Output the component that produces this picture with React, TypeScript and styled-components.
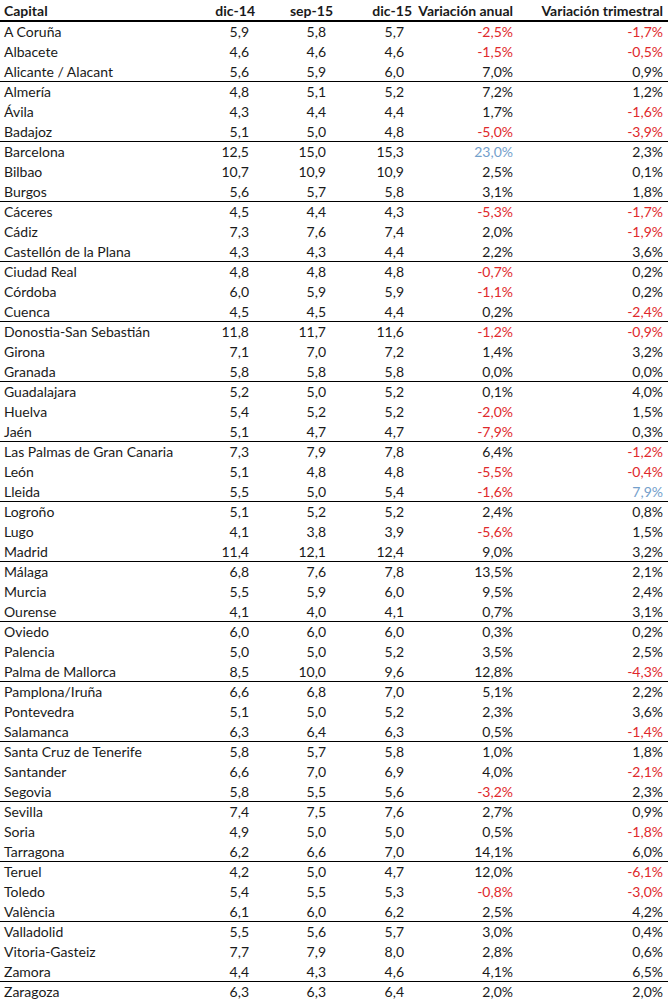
import React from "react";
import styled, { createGlobalStyle } from "styled-components";

const Global = createGlobalStyle`
  html, body { margin: 0; padding: 0; background: #ffffff; }
  body { font-family: Lato, "Open Sans", "Liberation Sans", sans-serif; }
`;

type Tone = "plain" | "neg" | "hi";

type Row = {
  name: string;
  d14: string;
  s15: string;
  d15: string;
  anual: string;
  trim: string;
  hiAnual?: boolean;
  hiTrim?: boolean;
};

const rows: Row[] = [
  { name: "A Coruña", d14: "5,9", s15: "5,8", d15: "5,7", anual: "-2,5%", trim: "-1,7%" },
  { name: "Albacete", d14: "4,6", s15: "4,6", d15: "4,6", anual: "-1,5%", trim: "-0,5%" },
  { name: "Alicante / Alacant", d14: "5,6", s15: "5,9", d15: "6,0", anual: "7,0%", trim: "0,9%" },
  { name: "Almería", d14: "4,8", s15: "5,1", d15: "5,2", anual: "7,2%", trim: "1,2%" },
  { name: "Ávila", d14: "4,3", s15: "4,4", d15: "4,4", anual: "1,7%", trim: "-1,6%" },
  { name: "Badajoz", d14: "5,1", s15: "5,0", d15: "4,8", anual: "-5,0%", trim: "-3,9%" },
  { name: "Barcelona", d14: "12,5", s15: "15,0", d15: "15,3", anual: "23,0%", trim: "2,3%", hiAnual: true },
  { name: "Bilbao", d14: "10,7", s15: "10,9", d15: "10,9", anual: "2,5%", trim: "0,1%" },
  { name: "Burgos", d14: "5,6", s15: "5,7", d15: "5,8", anual: "3,1%", trim: "1,8%" },
  { name: "Cáceres", d14: "4,5", s15: "4,4", d15: "4,3", anual: "-5,3%", trim: "-1,7%" },
  { name: "Cádiz", d14: "7,3", s15: "7,6", d15: "7,4", anual: "2,0%", trim: "-1,9%" },
  { name: "Castellón de la Plana", d14: "4,3", s15: "4,3", d15: "4,4", anual: "2,2%", trim: "3,6%" },
  { name: "Ciudad Real", d14: "4,8", s15: "4,8", d15: "4,8", anual: "-0,7%", trim: "0,2%" },
  { name: "Córdoba", d14: "6,0", s15: "5,9", d15: "5,9", anual: "-1,1%", trim: "0,2%" },
  { name: "Cuenca", d14: "4,5", s15: "4,5", d15: "4,4", anual: "0,2%", trim: "-2,4%" },
  { name: "Donostia-San Sebastián", d14: "11,8", s15: "11,7", d15: "11,6", anual: "-1,2%", trim: "-0,9%" },
  { name: "Girona", d14: "7,1", s15: "7,0", d15: "7,2", anual: "1,4%", trim: "3,2%" },
  { name: "Granada", d14: "5,8", s15: "5,8", d15: "5,8", anual: "0,0%", trim: "0,0%" },
  { name: "Guadalajara", d14: "5,2", s15: "5,0", d15: "5,2", anual: "0,1%", trim: "4,0%" },
  { name: "Huelva", d14: "5,4", s15: "5,2", d15: "5,2", anual: "-2,0%", trim: "1,5%" },
  { name: "Jaén", d14: "5,1", s15: "4,7", d15: "4,7", anual: "-7,9%", trim: "0,3%" },
  { name: "Las Palmas de Gran Canaria", d14: "7,3", s15: "7,9", d15: "7,8", anual: "6,4%", trim: "-1,2%" },
  { name: "León", d14: "5,1", s15: "4,8", d15: "4,8", anual: "-5,5%", trim: "-0,4%" },
  { name: "Lleida", d14: "5,5", s15: "5,0", d15: "5,4", anual: "-1,6%", trim: "7,9%", hiTrim: true },
  { name: "Logroño", d14: "5,1", s15: "5,2", d15: "5,2", anual: "2,4%", trim: "0,8%" },
  { name: "Lugo", d14: "4,1", s15: "3,8", d15: "3,9", anual: "-5,6%", trim: "1,5%" },
  { name: "Madrid", d14: "11,4", s15: "12,1", d15: "12,4", anual: "9,0%", trim: "3,2%" },
  { name: "Málaga", d14: "6,8", s15: "7,6", d15: "7,8", anual: "13,5%", trim: "2,1%" },
  { name: "Murcia", d14: "5,5", s15: "5,9", d15: "6,0", anual: "9,5%", trim: "2,4%" },
  { name: "Ourense", d14: "4,1", s15: "4,0", d15: "4,1", anual: "0,7%", trim: "3,1%" },
  { name: "Oviedo", d14: "6,0", s15: "6,0", d15: "6,0", anual: "0,3%", trim: "0,2%" },
  { name: "Palencia", d14: "5,0", s15: "5,0", d15: "5,2", anual: "3,5%", trim: "2,5%" },
  { name: "Palma de Mallorca", d14: "8,5", s15: "10,0", d15: "9,6", anual: "12,8%", trim: "-4,3%" },
  { name: "Pamplona/Iruña", d14: "6,6", s15: "6,8", d15: "7,0", anual: "5,1%", trim: "2,2%" },
  { name: "Pontevedra", d14: "5,1", s15: "5,0", d15: "5,2", anual: "2,3%", trim: "3,6%" },
  { name: "Salamanca", d14: "6,3", s15: "6,4", d15: "6,3", anual: "0,5%", trim: "-1,4%" },
  { name: "Santa Cruz de Tenerife", d14: "5,8", s15: "5,7", d15: "5,8", anual: "1,0%", trim: "1,8%" },
  { name: "Santander", d14: "6,6", s15: "7,0", d15: "6,9", anual: "4,0%", trim: "-2,1%" },
  { name: "Segovia", d14: "5,8", s15: "5,5", d15: "5,6", anual: "-3,2%", trim: "2,3%" },
  { name: "Sevilla", d14: "7,4", s15: "7,5", d15: "7,6", anual: "2,7%", trim: "0,9%" },
  { name: "Soria", d14: "4,9", s15: "5,0", d15: "5,0", anual: "0,5%", trim: "-1,8%" },
  { name: "Tarragona", d14: "6,2", s15: "6,6", d15: "7,0", anual: "14,1%", trim: "6,0%" },
  { name: "Teruel", d14: "4,2", s15: "5,0", d15: "4,7", anual: "12,0%", trim: "-6,1%" },
  { name: "Toledo", d14: "5,4", s15: "5,5", d15: "5,3", anual: "-0,8%", trim: "-3,0%" },
  { name: "València", d14: "6,1", s15: "6,0", d15: "6,2", anual: "2,5%", trim: "4,2%" },
  { name: "Valladolid", d14: "5,5", s15: "5,6", d15: "5,7", anual: "3,0%", trim: "0,4%" },
  { name: "Vitoria-Gasteiz", d14: "7,7", s15: "7,9", d15: "8,0", anual: "2,8%", trim: "0,6%" },
  { name: "Zamora", d14: "4,4", s15: "4,3", d15: "4,6", anual: "4,1%", trim: "6,5%" },
  { name: "Zaragoza", d14: "6,3", s15: "6,3", d15: "6,4", anual: "2,0%", trim: "2,0%" },
];

const Sheet = styled.div`
  width: 668px;
  display: flex;
  flex-direction: column;
  font-family: Lato, "Open Sans", "Liberation Sans", sans-serif;
  font-size: 14px;
  color: #1a1a1a;
`;

const GridRow = styled.div<{ $head?: boolean; $rule?: boolean }>`
  display: grid;
  grid-template-columns: 200px 57px 78px 79px 101px 150px;
  padding-right: 3px;
  box-sizing: border-box;
  height: ${(p) => (p.$head ? 22 : 20)}px;
  line-height: ${(p) => (p.$head ? 21 : 20)}px;
  font-weight: ${(p) => (p.$head ? 700 : 400)};
  border-bottom: ${(p) =>
    p.$head ? "2px solid #000" : p.$rule ? "1px solid #000" : "0"};
`;

const Cell = styled.div<{ $num?: boolean; $pad?: number; $tone?: Tone }>`
  white-space: nowrap;
  text-align: ${(p) => (p.$num ? "right" : "left")};
  padding-left: ${(p) => (p.$num ? 0 : 4)}px;
  padding-right: ${(p) => (p.$num ? p.$pad ?? 2 : 0)}px;
  color: ${(p) =>
    p.$tone === "neg" ? "#e0282b" : p.$tone === "hi" ? "#74a0cb" : "inherit"};
`;

const tone = (v: string, hi?: boolean): Tone =>
  hi ? "hi" : v.startsWith("-") ? "neg" : "plain";

export default function App() {
  return (
    <>
      <Global />
      <Sheet>
        <GridRow $head>
          <Cell>Capital</Cell>
          <Cell $num>dic-14</Cell>
          <Cell $num>sep-15</Cell>
          <Cell $num>dic-15</Cell>
          <Cell $num>Variación anual</Cell>
          <Cell $num>Variación trimestral</Cell>
        </GridRow>
        {rows.map((r, i) => (
          <GridRow key={r.name} $rule={i % 3 === 2 && i < rows.length - 1}>
            <Cell>{r.name}</Cell>
            <Cell $num $pad={8}>{r.d14}</Cell>
            <Cell $num $pad={9}>{r.s15}</Cell>
            <Cell $num $pad={10}>{r.d15}</Cell>
            <Cell $num $pad={2} $tone={tone(r.anual, r.hiAnual)}>{r.anual}</Cell>
            <Cell $num $pad={2} $tone={tone(r.trim, r.hiTrim)}>{r.trim}</Cell>
          </GridRow>
        ))}
      </Sheet>
    </>
  );
}
